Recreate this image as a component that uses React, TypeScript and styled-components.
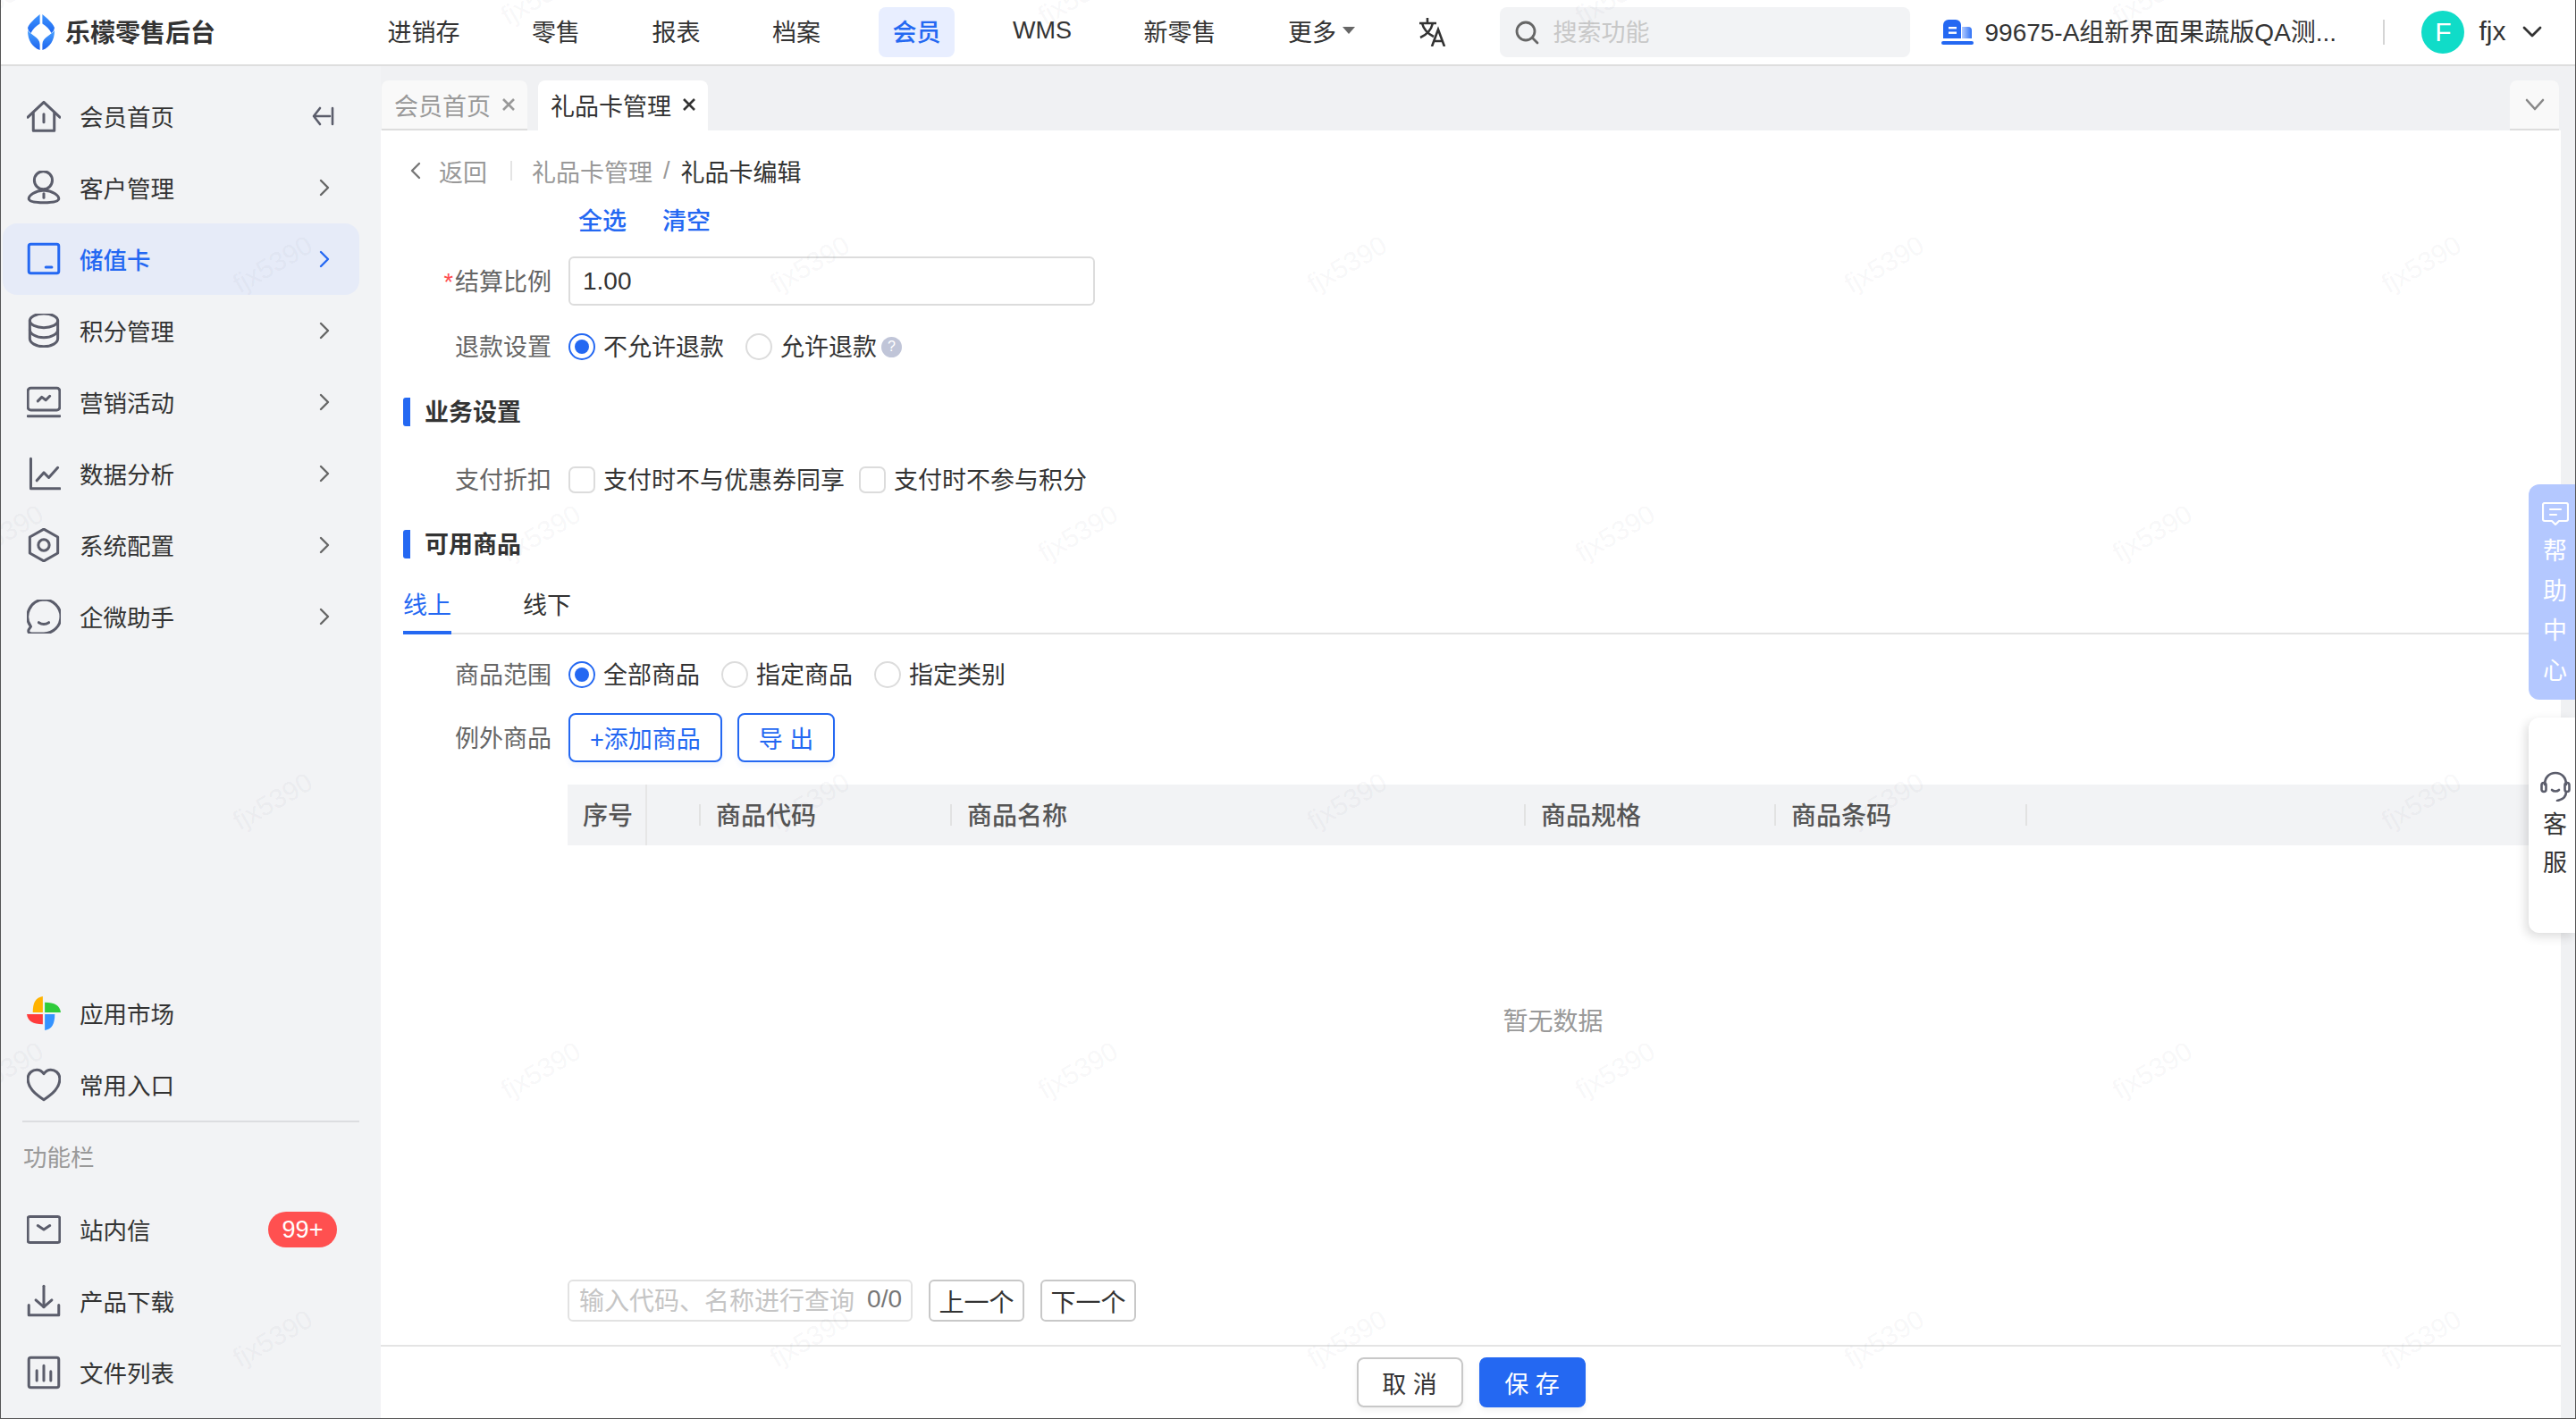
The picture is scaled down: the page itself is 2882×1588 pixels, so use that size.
import React from 'react'
import styled, { createGlobalStyle } from 'styled-components'

const GlobalStyle = createGlobalStyle`
  html, body {
    margin: 0;
    padding: 0;
    overflow: hidden;
    background: #f2f3f5;
  }
  * { box-sizing: border-box; }
  body {
    font-family: "Liberation Sans", "Noto Sans CJK SC", sans-serif;
    font-size: 27px;
    color: #333;
  }
`

const BLUE = '#2468f2'

const Page = styled.div`
  position: relative;
  width: 2882px;
  height: 1588px;
  display: flex;
  flex-direction: column;
  overflow: hidden;
  background: #f2f3f5;
  border: 1px solid #555;
  border-top: 0;
`

/* ---------- watermark ---------- */
const WatermarkLayer = styled.div`
  position: absolute;
  top: -154px;
  left: -147px;
  display: grid;
  grid-template-columns: repeat(11, 300.5px);
  grid-auto-rows: 300.4px;
  pointer-events: none;
  z-index: 20;
`

const Mark = styled.span`
  display: flex;
  align-items: center;
  justify-content: center;
  font-size: 30px;
  color: rgba(40, 50, 70, 0.055);
  transform: rotate(-30deg);
`

/* ---------- header ---------- */
const Header = styled.header`
  height: 74px;
  flex: none;
  display: flex;
  align-items: center;
  padding-left: 30px;
  background: #fff;
  border-bottom: 2px solid #dedede;
`

const LogoTitle = styled.div`
  margin-left: 12px;
  width: 168px;
  padding-bottom: 3px;
  font-size: 28px;
  font-weight: 700;
  color: #333;
  white-space: nowrap;
`

const Nav = styled.nav`
  margin-left: 177px;
  display: flex;
  gap: 49.5px;
`

const NavItem = styled.div<{ $active?: boolean }>`
  height: 56px;
  padding: 0 15.5px 4px;
  display: flex;
  align-items: center;
  border-radius: 8px;
  white-space: nowrap;
  background: ${(p) => (p.$active ? '#e8eeff' : 'transparent')};
  color: ${(p) => (p.$active ? BLUE : '#333')};
  font-weight: ${(p) => (p.$active ? 500 : 400)};
`

const Caret = styled.i`
  margin-left: 7px;
  width: 0;
  height: 0;
  border-left: 7px solid transparent;
  border-right: 7px solid transparent;
  border-top: 8px solid #666;
`

const TranslateIcon = styled.svg`
  margin-left: 56px;
  width: 34px;
  height: 32px;
  flex: none;
`

const SearchBox = styled.div`
  margin-left: 57px;
  width: 459px;
  height: 56px;
  flex: none;
  display: flex;
  align-items: center;
  gap: 15px;
  padding-left: 17px;
  border-radius: 8px;
  background: #f2f3f5;
  color: #c8c8c8;
`

const SearchHint = styled.span`
  padding-bottom: 4px;
`

const OrgIcon = styled.svg`
  margin-left: 35px;
  width: 36px;
  height: 30px;
  flex: none;
`

const OrgName = styled.div`
  margin-left: 12px;
  width: 394px;
  padding-bottom: 4px;
  font-size: 28px;
  white-space: nowrap;
`

const HeaderDivider = styled.i`
  margin-left: 52px;
  width: 2px;
  height: 28px;
  background: #d5d5d5;
`

const Avatar = styled.div`
  margin-left: 41px;
  width: 48px;
  height: 48px;
  flex: none;
  display: flex;
  align-items: center;
  justify-content: center;
  border-radius: 50%;
  background: #10dcc8;
  color: #fff;
  font-size: 30px;
`

const UserName = styled.div`
  margin-left: 16px;
  padding-bottom: 3px;
  font-size: 30px;
`

const UserCaret = styled.svg`
  margin-left: 19px;
  width: 22px;
  height: 14px;
  fill: none;
  stroke: #333;
  stroke-width: 2.8;
  stroke-linecap: round;
  stroke-linejoin: round;
`

/* ---------- body ---------- */
const Body = styled.div`
  flex: 1;
  min-height: 0;
  display: flex;
`

const Sidebar = styled.aside`
  width: 425px;
  flex: none;
  display: flex;
  flex-direction: column;
  padding-top: 16px;
  padding-bottom: 11px;
  background: #f2f3f5;
`

const MenuItem = styled.div<{ $active?: boolean }>`
  height: 80px;
  flex: none;
  margin: 0 24px 0 2px;
  padding: 0 33px 0 27px;
  display: flex;
  align-items: center;
  gap: 21px;
  border-radius: 16px;
  font-size: 26.5px;
  background: ${(p) => (p.$active ? '#e6ebf8' : 'transparent')};
  color: ${(p) => (p.$active ? BLUE : '#333')};
  font-weight: ${(p) => (p.$active ? 500 : 400)};
`

const MenuIcon = styled.svg`
  width: 38px;
  height: 38px;
  flex: none;
  fill: none;
  stroke: currentColor;
  stroke-width: 2.7;
  stroke-linecap: round;
  stroke-linejoin: round;
`

const IconTint = styled.span<{ $active?: boolean }>`
  display: flex;
  color: ${(p) => (p.$active ? BLUE : '#5b5d6b')};
`

const MenuLabel = styled.span`
  flex: 1;
  padding-bottom: 1px;
  white-space: nowrap;
`

const Chevron = styled.svg<{ $active?: boolean }>`
  width: 12px;
  height: 20px;
  flex: none;
  fill: none;
  stroke: ${(p) => (p.$active ? BLUE : '#666')};
  stroke-width: 2.4;
  stroke-linecap: round;
  stroke-linejoin: round;
`

const Collapse = styled.svg`
  width: 26px;
  height: 22px;
  flex: none;
  margin-right: -6px;
  fill: none;
  stroke: #5b5d6b;
  stroke-width: 2.6;
  stroke-linecap: round;
  stroke-linejoin: round;
`

const Badge = styled.span`
  width: 77px;
  height: 40px;
  margin-right: -8px;
  display: flex;
  align-items: center;
  justify-content: center;
  border-radius: 20px;
  background: #ff5050;
  color: #fff;
  font-size: 27px;
`

const SideBottom = styled.div`
  margin-top: auto;
  display: flex;
  flex-direction: column;
`

const SideDivider = styled.div`
  height: 2px;
  margin: 0 24px;
  background: #dcdde0;
`

const SideCaption = styled.div`
  height: 80px;
  padding: 20px 0 0 25px;
  font-size: 26.5px;
  color: #999;
  line-height: 40px;
`

const Main = styled.main`
  flex: 1;
  min-width: 0;
  display: flex;
  flex-direction: column;
  padding-right: 16px;
  background: #f0f1f3;
`

const TabStrip = styled.div`
  height: 72px;
  flex: none;
  display: flex;
  gap: 12px;
  padding: 16px 2px 0 1px;
`

const PageTab = styled.div<{ $active?: boolean }>`
  height: 56px;
  display: flex;
  align-items: center;
  gap: 12px;
  padding: 0 13px 0 14px;
  border-radius: 8px 8px 0 0;
  white-space: nowrap;
  background: ${(p) => (p.$active ? '#fff' : '#f9f9f9')};
  color: ${(p) => (p.$active ? '#333' : '#999')};
  border-bottom: 2px solid ${(p) => (p.$active ? '#fff' : '#dddddd')};
`

const CloseMark = styled.svg`
  width: 16px;
  height: 16px;
  flex: none;
  stroke: currentColor;
  stroke-width: 2.6;
`

const TabMore = styled.div`
  margin-left: auto;
  width: 55px;
  height: 56px;
  display: flex;
  align-items: center;
  justify-content: center;
  border-radius: 8px 8px 0 0;
  background: #f9f9f9;
  border-bottom: 2px solid #dddddd;
`

const Panel = styled.section`
  flex: 1;
  min-height: 0;
  display: flex;
  flex-direction: column;
  background: #fff;
`

const FormArea = styled.div`
  flex: 1;
  min-height: 0;
  display: flex;
  flex-direction: column;
  padding: 25px 25px 26px 25px;
`

const Crumbs = styled.div`
  height: 44px;
  flex: none;
  padding-bottom: 4px;
  display: flex;
  align-items: center;
  color: #999;
`

const BackChevron = styled.svg`
  width: 12px;
  height: 20px;
  margin-left: 8px;
  margin-right: 20px;
  fill: none;
  stroke: #777;
  stroke-width: 2.4;
  stroke-linecap: round;
  stroke-linejoin: round;
`

const CrumbDivider = styled.i`
  width: 2px;
  height: 22px;
  margin: 0 22px 0 26px;
  background: #e4e4e4;
`

const CrumbSlash = styled.span`
  margin: 0 12px;
`

const CrumbCurrent = styled.span`
  color: #333;
`

const LinkRow = styled.div`
  height: 40px;
  flex: none;
  margin-top: 12px;
  padding: 0 0 3px 196px;
  display: flex;
  align-items: center;
  gap: 40px;
  color: ${BLUE};
  font-weight: 500;
`

const FormRow = styled.div<{ $gap: number; $height?: number }>`
  flex: none;
  margin-top: ${(p) => p.$gap}px;
  height: ${(p) => p.$height ?? 40}px;
  display: grid;
  grid-template-columns: 166px 1fr;
  column-gap: 19px;
  align-items: center;
`

const FormLabel = styled.label<{ $required?: boolean }>`
  padding-bottom: 3px;
  text-align: right;
  color: #666;
  white-space: nowrap;
  ${(p) => p.$required && `
    &::before {
      content: '*';
      color: #ff4d4f;
      margin-right: 2px;
    }
  `}
`

const TextInput = styled.input`
  width: 589px;
  height: 55px;
  padding: 0 14px;
  border: 2px solid #dcdcdc;
  border-radius: 6px;
  outline: none;
  font: inherit;
  font-size: 28px;
  color: #333;
`

const Options = styled.div<{ $gap: number }>`
  display: flex;
  align-items: center;
  gap: ${(p) => p.$gap}px;
`

const Option = styled.div`
  display: flex;
  align-items: center;
  gap: 9px;
  white-space: nowrap;
`

const OptionText = styled.span`
  padding-bottom: 3px;
`

const Radio = styled.i<{ $checked?: boolean }>`
  width: 30px;
  height: 30px;
  flex: none;
  display: flex;
  align-items: center;
  justify-content: center;
  border-radius: 50%;
  background: #fff;
  border: 2px solid ${(p) => (p.$checked ? BLUE : '#dcdcdc')};
  &::after {
    content: '';
    width: 16px;
    height: 16px;
    border-radius: 50%;
    background: ${(p) => (p.$checked ? BLUE : 'transparent')};
  }
`

const Checkbox = styled.i`
  width: 30px;
  height: 30px;
  flex: none;
  background: #fff;
  border: 2px solid #dcdcdc;
  border-radius: 7px;
`

const HelpDot = styled.span`
  width: 23px;
  height: 23px;
  margin-left: -4px;
  display: flex;
  align-items: center;
  justify-content: center;
  border-radius: 50%;
  background: #c0c5d8;
  color: #fff;
  font-size: 16px;
`

const SectionTitle = styled.h3<{ $gap: number }>`
  flex: none;
  height: 32px;
  margin: ${(p) => p.$gap}px 0 0;
  padding: 0 0 3px 16px;
  display: flex;
  align-items: center;
  border-left: 8px solid ${BLUE};
  border-radius: 3px;
  font-size: 27px;
  font-weight: 700;
  color: #333;
`

const SubTabs = styled.div`
  flex: none;
  height: 60px;
  margin-top: 25px;
  display: flex;
  gap: 80px;
  border-bottom: 2px solid #e4e4e4;
`

const SubTab = styled.div<{ $active?: boolean }>`
  height: 60px;
  width: 54px;
  padding-bottom: 6px;
  display: flex;
  align-items: center;
  color: ${(p) => (p.$active ? BLUE : '#333')};
  border-bottom: 4px solid ${(p) => (p.$active ? BLUE : 'transparent')};
`

const GhostButton = styled.button`
  height: 55px;
  padding: 0 22px;
  background: #fff;
  border: 2px solid ${BLUE};
  border-radius: 8px;
  color: ${BLUE};
  font: inherit;
  box-shadow: 0 4px 6px rgba(36, 104, 242, 0.06);
`

const ProductTable = styled.div`
  flex: none;
  margin: 25px 0 0 184px;
`

const TableHead = styled.div`
  height: 68px;
  display: grid;
  grid-template-columns: 89px 60px 281px 642px 280px 281px 1fr;
  background: #f2f3f5;
`

const HeadCell = styled.div<{ $fixed?: boolean; $plain?: boolean }>`
  position: relative;
  display: flex;
  align-items: center;
  padding: 0 0 3px 17px;
  font-size: 28px;
  color: #555;
  font-weight: 500;
  white-space: nowrap;
  border-right: ${(p) => (p.$fixed ? '2px solid #e6e6e6' : '0')};
  ${(p) => !p.$fixed && !p.$plain && `
    &::after {
      content: '';
      position: absolute;
      top: 22px;
      right: 0;
      width: 2px;
      height: 24px;
      background: #e2e2e2;
    }
  `}
`

const EmptyState = styled.div`
  height: 392px;
  padding-bottom: 3px;
  display: flex;
  align-items: center;
  justify-content: center;
  font-size: 28px;
  color: #999;
`

const Pager = styled.div`
  margin: auto 0 0 184px;
  display: flex;
  gap: 18px;
`

const PagerSearch = styled.div`
  width: 386px;
  height: 47px;
  padding: 0 10px 3px 11px;
  display: flex;
  align-items: center;
  justify-content: space-between;
  border: 2px solid #e2e2e2;
  border-radius: 6px;
  font-size: 28px;
  white-space: nowrap;
  color: #c5c5c5;
`

const PagerCount = styled.span`
  color: #777;
  font-size: 28px;
`

const PagerButton = styled.button`
  width: 107px;
  height: 47px;
  padding: 0;
  background: #fff;
  border: 2px solid #c8c8c8;
  border-radius: 6px;
  color: #333;
  font: inherit;
  font-size: 28px;
`

const Footer = styled.footer`
  height: 82px;
  flex: none;
  display: flex;
  align-items: center;
  justify-content: center;
  gap: 18px;
  border-top: 2px solid #e4e4e4;
`

const FooterButton = styled.button<{ $primary?: boolean }>`
  width: 119px;
  height: 56px;
  padding: 0;
  border-radius: 8px;
  font: inherit;
  background: ${(p) => (p.$primary ? BLUE : '#fff')};
  color: ${(p) => (p.$primary ? '#fff' : '#333')};
  border: 2px solid ${(p) => (p.$primary ? BLUE : '#c8c8c8')};
  box-shadow: 0 4px 6px rgba(0, 0, 0, 0.05);
`

/* ---------- floating side tabs ---------- */
const HelpTab = styled.div`
  position: absolute;
  top: 542px;
  right: 0;
  width: 52px;
  height: 241px;
  padding: 20px 0 0 7px;
  display: flex;
  flex-direction: column;
  align-items: center;
  border-radius: 12px 0 0 12px;
  background: #b4c8ff;
  color: #fff;
  line-height: 44.5px;
  z-index: 10;
`

const ServiceTab = styled.div`
  position: absolute;
  top: 803px;
  right: 0;
  width: 52px;
  height: 241px;
  padding: 60px 0 0 7px;
  display: flex;
  flex-direction: column;
  align-items: center;
  border-radius: 12px 0 0 12px;
  background: #fff;
  color: #333;
  line-height: 43px;
  box-shadow: -3px 4px 12px rgba(0, 0, 0, 0.14);
  z-index: 10;
`

const SideTabGlyphs = styled.div<{ $gap: number }>`
  margin-top: ${(p) => p.$gap}px;
  display: flex;
  flex-direction: column;
  align-items: center;
`

const menuIcons: Record<string, React.ReactNode> = {
  home: (
    <>
      <path d="M3 20 19 5l16 15" />
      <path d="M8.5 16v17.5h21V16" />
      <path d="M19 17v8" />
    </>
  ),
  user: (
    <>
      <circle cx="18.5" cy="11.6" r="9" />
      <path d="M19 21.7C10 22 4 27 4 30c0 3 6 4 15 4s15-1 15-4c0-3-6-8-15-8.3Z" />
      <path d="M19 25v4" />
    </>
  ),
  card: (
    <>
      <rect x="4" y="4" width="30" height="29" rx="2" />
      <path d="M21 27h6" />
    </>
  ),
  coins: (
    <>
      <ellipse cx="19" cy="9" rx="14" ry="7" />
      <path d="M5 9v18c0 4 6 8 14 8s14-4 14-8V9" />
      <path d="M5 18c0 4 6 8 14 8s14-4 14-8" />
    </>
  ),
  screen: (
    <>
      <rect x="3" y="5" width="32" height="22" rx="3" />
      <path d="M3 33h32" />
      <path d="M13 18l4-4 4 3 4-4" />
    </>
  ),
  chart: (
    <>
      <path d="M6 4v30h29" />
      <path d="M12 26l7-8 5 5 9-10" />
    </>
  ),
  hexagon: (
    <>
      <path d="M19 3l14 8v16l-14 8-14-8V11Z" />
      <circle cx="19" cy="19" r="5.5" />
    </>
  ),
  bubble: (
    <>
      <path d="M19 2a17 17 0 0 1 0 34H7c-3 0-4-2-3-4l2-3A17 17 0 0 1 19 2Z" />
      <path d="M14 25c3 2 7 2 10 0" />
    </>
  ),
  heart: <path d="M19 34C10 28 3 22 3 13 3 7 8 4 12 4c3 0 5 1 7 4 2-3 4-4 7-4 4 0 9 3 9 9 0 9-7 15-16 21Z" />,
  mail: (
    <>
      <rect x="3" y="6" width="32" height="26" rx="2" />
      <path d="M13 15l6 4 6-4" />
    </>
  ),
  download: (
    <>
      <path d="M19 4v21" />
      <path d="M11 18l8 7 8-7" />
      <path d="M4 23v10h30V23" />
    </>
  ),
  files: (
    <>
      <rect x="4" y="4" width="30" height="30" rx="2" />
      <path d="M12 17v10M19 12v15M26 18v9" />
    </>
  ),
}

const PinwheelIcon = styled(MenuIcon)`
  stroke: none;
`

const Pinwheel = () => (
  <PinwheelIcon viewBox="2 2 34 34">
    <path d="M18 18V2C11 3 8 8 8 18Z" fill="#ffb300" />
    <path d="M20 18h16c-1-7-6-10-16-10Z" fill="#2fcb3a" />
    <path d="M20 20v16c7-1 10-6 10-16Z" fill="#3493ff" />
    <path d="M18 20H2c1 7 6 10 16 10Z" fill="#ff3b3b" />
  </PinwheelIcon>
)

const RightChevron = ({ active }: { active?: boolean }) => (
  <Chevron $active={active} viewBox="0 0 12 20">
    <path d="M2 2l8 8-8 8" />
  </Chevron>
)

type MenuEntry = { icon: string; label: string; active?: boolean }

const topMenu: MenuEntry[] = [
  { icon: 'user', label: '客户管理' },
  { icon: 'card', label: '储值卡', active: true },
  { icon: 'coins', label: '积分管理' },
  { icon: 'screen', label: '营销活动' },
  { icon: 'chart', label: '数据分析' },
  { icon: 'hexagon', label: '系统配置' },
  { icon: 'bubble', label: '企微助手' },
]

const navItems = ['进销存', '零售', '报表', '档案', '会员', 'WMS', '新零售']

const Glyph = ({ name, active }: { name: string; active?: boolean }) => (
  <IconTint $active={active}>
    <MenuIcon viewBox="2 2 34 34">{menuIcons[name]}</MenuIcon>
  </IconTint>
)

const Close = () => (
  <CloseMark viewBox="0 0 16 16">
    <path d="M2 2l12 12M14 2 2 14" />
  </CloseMark>
)

const Logo = () => (
  <svg width="30" height="40" viewBox="0 0 30 40">
    <defs>
      <linearGradient id="logoTop" x1="0" y1="0" x2="0" y2="1">
        <stop offset="0" stopColor="#3f95ff" />
        <stop offset="1" stopColor="#1f68f0" />
      </linearGradient>
      <linearGradient id="logoLow" x1="0" y1="0" x2="0" y2="1">
        <stop offset="0" stopColor="#4aa2ff" />
        <stop offset="1" stopColor="#1c62ee" />
      </linearGradient>
    </defs>
    <path d="M13.6 0v10.5C9 13 5.5 17 3.6 21 1.5 19.5.3 17.5 0 15 2.5 9 8 5 13.6 0Z" fill="url(#logoTop)" />
    <path d="M16.4 0v10.5C21 13 24.500 17 26.400 21c2.100-1.500 3.300-3.500 3.600-6C27.500 9 22 5 16.400 0Z" fill="url(#logoTop)" />
    <path d="M0 18c3 4.500 13.600 8 13.600 15.500V40C5 37 0 29 0 18Z" fill="url(#logoLow)" />
    <path d="M30 18c-3 4.500-13.600 8-13.600 15.500V40C25 37 30 29 30 18Z" fill="url(#logoLow)" />
  </svg>
)

export default function App() {
  const marks = Array.from({ length: 66 }, (_, i) => {
    const row = Math.floor(i / 11)
    const col = i % 11
    return (row + col) % 2 === 0 ? <Mark key={i}>fjx5390</Mark> : <span key={i} />
  })

  return (
    <Page>
      <GlobalStyle />
      <Header>
        <Logo />
        <LogoTitle>乐檬零售后台</LogoTitle>
        <Nav>
          {navItems.map((item) => (
            <NavItem key={item} $active={item === '会员'}>{item}</NavItem>
          ))}
          <NavItem>更多<Caret /></NavItem>
        </Nav>
        <TranslateIcon viewBox="0 0 34 32" fill="none" stroke="#333" strokeWidth="2.6">
          <path d="M1 6h19M10 0v6M4 6c2 8 7 12 13 15M16 6c-2 8-7 13-14 16" />
          <path d="M15 32l7-19 7 19M17.5 26h9" />
        </TranslateIcon>
        <SearchBox>
          <svg width="27" height="27" viewBox="0 0 27 27" fill="none" stroke="#666" strokeWidth="2.8" strokeLinecap="round">
            <circle cx="12" cy="12" r="10" />
            <path d="M19.500 19.500 25 25" />
          </svg>
          <SearchHint>搜索功能</SearchHint>
        </SearchBox>
        <OrgIcon viewBox="0 0 36 30">
          <defs>
            <linearGradient id="orgSide" x1="0" y1="0" x2="1" y2="0">
              <stop offset="0" stopColor="#b5ccff" />
              <stop offset="1" stopColor="#2f72f5" />
            </linearGradient>
          </defs>
          <path d="M2 7a6 6 0 0 1 6-6h8a6 6 0 0 1 6 6v15H2Z" fill={BLUE} />
          <rect x="8" y="9" width="9" height="2.400" fill="#fff" />
          <rect x="8" y="14.500" width="9" height="2.400" fill="#fff" />
          <path d="M23 9h7a4 4 0 0 1 4 4v9H23Z" fill="url(#orgSide)" />
          <rect x="0" y="25" width="36" height="4" rx="2" fill={BLUE} />
        </OrgIcon>
        <OrgName>99675-A组新界面果蔬版QA测...</OrgName>
        <HeaderDivider />
        <Avatar>F</Avatar>
        <UserName>fjx</UserName>
        <UserCaret viewBox="0 0 22 14">
          <path d="M2 2l9 9 9-9" />
        </UserCaret>
      </Header>

      <Body>
        <Sidebar>
          <MenuItem>
            <Glyph name="home" />
            <MenuLabel>会员首页</MenuLabel>
            <Collapse viewBox="0 0 26 22">
              <path d="M9 2 2 11l7 9M2 11h18M23 2v18" />
            </Collapse>
          </MenuItem>
          {topMenu.map((entry) => (
            <MenuItem key={entry.label} $active={entry.active}>
              <Glyph name={entry.icon} active={entry.active} />
              <MenuLabel>{entry.label}</MenuLabel>
              <RightChevron active={entry.active} />
            </MenuItem>
          ))}
          <SideBottom>
            <MenuItem>
              <Pinwheel />
              <MenuLabel>应用市场</MenuLabel>
            </MenuItem>
            <MenuItem>
              <Glyph name="heart" />
              <MenuLabel>常用入口</MenuLabel>
            </MenuItem>
            <SideDivider />
            <SideCaption>功能栏</SideCaption>
            <MenuItem>
              <Glyph name="mail" />
              <MenuLabel>站内信</MenuLabel>
              <Badge>99+</Badge>
            </MenuItem>
            <MenuItem>
              <Glyph name="download" />
              <MenuLabel>产品下载</MenuLabel>
            </MenuItem>
            <MenuItem>
              <Glyph name="files" />
              <MenuLabel>文件列表</MenuLabel>
            </MenuItem>
          </SideBottom>
        </Sidebar>

        <Main>
          <TabStrip>
            <PageTab>会员首页<Close /></PageTab>
            <PageTab $active>礼品卡管理<Close /></PageTab>
            <TabMore>
              <svg width="22" height="14" viewBox="0 0 22 14" fill="none" stroke="#888" strokeWidth="2.6" strokeLinecap="round" strokeLinejoin="round">
                <path d="M2 2l9 10 9-10" />
              </svg>
            </TabMore>
          </TabStrip>

          <Panel>
            <FormArea>
              <Crumbs>
                <BackChevron viewBox="0 0 12 20"><path d="M10 2 2 10l8 8" /></BackChevron>
                返回
                <CrumbDivider />
                礼品卡管理
                <CrumbSlash>/</CrumbSlash>
                <CrumbCurrent>礼品卡编辑</CrumbCurrent>
              </Crumbs>

              <LinkRow>
                <span>全选</span>
                <span>清空</span>
              </LinkRow>

              <FormRow $gap={20} $height={55}>
                <FormLabel $required>结算比例</FormLabel>
                <TextInput defaultValue="1.00" readOnly />
              </FormRow>

              <FormRow $gap={25}>
                <FormLabel>退款设置</FormLabel>
                <Options $gap={24}>
                  <Option><Radio $checked /><OptionText>不允许退款</OptionText></Option>
                  <Option><Radio /><OptionText>允许退款</OptionText><HelpDot>?</HelpDot></Option>
                </Options>
              </FormRow>

              <SectionTitle $gap={38}>业务设置</SectionTitle>

              <FormRow $gap={39}>
                <FormLabel>支付折扣</FormLabel>
                <Options $gap={16}>
                  <Option><Checkbox /><OptionText>支付时不与优惠券同享</OptionText></Option>
                  <Option><Checkbox /><OptionText>支付时不参与积分</OptionText></Option>
                </Options>
              </FormRow>

              <SectionTitle $gap={37}>可用商品</SectionTitle>

              <SubTabs>
                <SubTab $active>线上</SubTab>
                <SubTab>线下</SubTab>
              </SubTabs>

              <FormRow $gap={24}>
                <FormLabel>商品范围</FormLabel>
                <Options $gap={24}>
                  <Option><Radio $checked /><OptionText>全部商品</OptionText></Option>
                  <Option><Radio /><OptionText>指定商品</OptionText></Option>
                  <Option><Radio /><OptionText>指定类别</OptionText></Option>
                </Options>
              </FormRow>

              <FormRow $gap={24} $height={55}>
                <FormLabel>例外商品</FormLabel>
                <Options $gap={17}>
                  <GhostButton>+添加商品</GhostButton>
                  <GhostButton>导 出</GhostButton>
                </Options>
              </FormRow>

              <ProductTable>
                <TableHead>
                  <HeadCell $fixed>序号</HeadCell>
                  <HeadCell />
                  <HeadCell>商品代码</HeadCell>
                  <HeadCell>商品名称</HeadCell>
                  <HeadCell>商品规格</HeadCell>
                  <HeadCell>商品条码</HeadCell>
                  <HeadCell $plain />
                </TableHead>
                <EmptyState>暂无数据</EmptyState>
              </ProductTable>

              <Pager>
                <PagerSearch>
                  输入代码、名称进行查询
                  <PagerCount>0/0</PagerCount>
                </PagerSearch>
                <PagerButton>上一个</PagerButton>
                <PagerButton>下一个</PagerButton>
              </Pager>
            </FormArea>

            <Footer>
              <FooterButton>取 消</FooterButton>
              <FooterButton $primary>保 存</FooterButton>
            </Footer>
          </Panel>
        </Main>
      </Body>

      <HelpTab>
        <svg width="30" height="26" viewBox="0 0 30 26" fill="none" stroke="#fff" strokeWidth="2.2" strokeLinejoin="round" strokeLinecap="round">
          <path d="M3 1h24a2 2 0 0 1 2 2v16a2 2 0 0 1-2 2h-8l-4 4-4-4H3a2 2 0 0 1-2-2V3a2 2 0 0 1 2-2Z" />
          <path d="M9 8h12M9 14h7" />
        </svg>
        <SideTabGlyphs $gap={7}>
          <span>帮</span>
          <span>助</span>
          <span>中</span>
          <span>心</span>
        </SideTabGlyphs>
      </HelpTab>

      <ServiceTab>
        <svg width="34" height="34" viewBox="0 0 34 34" fill="none" stroke="#5b5d6b" strokeWidth="2.6" strokeLinecap="round">
          <path d="M5 15C5 7 10 2 17 2s12 5 12 13" />
          <rect x="1.500" y="13" width="5" height="10" rx="2.500" />
          <rect x="27.500" y="13" width="5" height="10" rx="2.500" />
          <path d="M29 23c0 6-4 9-10 10" />
          <path d="M13 21c2 2 6 2 8 0" />
        </svg>
        <SideTabGlyphs $gap={5}>
          <span>客</span>
          <span>服</span>
        </SideTabGlyphs>
      </ServiceTab>

      <WatermarkLayer>{marks}</WatermarkLayer>
    </Page>
  )
}
